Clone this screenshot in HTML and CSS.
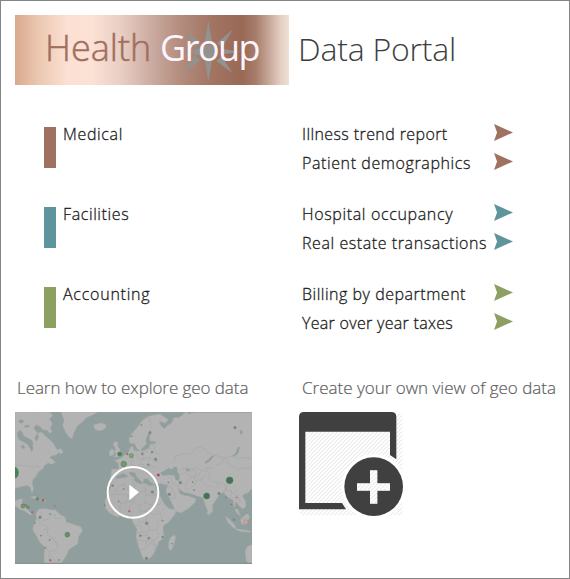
FILE: index.html
```
<!DOCTYPE html>
<html lang="en">
<head>
<meta charset="utf-8">
<title>Health Group Data Portal</title>
<link rel="stylesheet" href="styles.css">
</head>
<body>
<main class="portal">
  <header class="header">
    <div class="logo">
      <svg class="star" viewBox="552 62 168 184" aria-hidden="true"><path fill="#92928f" d="M625 62l11 60-11 8-11-8zM625 246l-10-62 10-8 10 8zM698 88l-31 55-16-15zM698 219l-49-36 16-15zM552 88l49 39-16 16zM552 219l31-53 16 15zM552 155l50-11v22zM720 155l-55-9v18z"/><ellipse cx="626" cy="154" rx="18" ry="21" fill="#92928f"/></svg>
      <div class="brand"><span class="health">Health</span><span class="group">Group</span></div>
    </div>
    <h1 class="title">Data Portal</h1>
  </header>

  <section class="topic medical">
    <div class="bar"></div>
    <h2 class="name"><span class="n1">Medical</span></h2>
    <ul class="reports">
      <li><span class="t1">Illness trend report</span><svg class="arrow" viewBox="0 0 56 50"><path d="M0 0L56 25 0 50 9 25z"/></svg></li>
      <li><span class="t2">Patient demographics</span><svg class="arrow" viewBox="0 0 56 50"><path d="M0 0L56 25 0 50 9 25z"/></svg></li>
    </ul>
  </section>
  <section class="topic facilities">
    <div class="bar"></div>
    <h2 class="name"><span class="n2">Facilities</span></h2>
    <ul class="reports">
      <li><span class="t3">Hospital occupancy</span><svg class="arrow" viewBox="0 0 56 50"><path d="M0 0L56 25 0 50 9 25z"/></svg></li>
      <li><span class="t4">Real estate transactions</span><svg class="arrow" viewBox="0 0 56 50"><path d="M0 0L56 25 0 50 9 25z"/></svg></li>
    </ul>
  </section>
  <section class="topic accounting">
    <div class="bar"></div>
    <h2 class="name"><span class="n3">Accounting</span></h2>
    <ul class="reports">
      <li><span class="t5">Billing by department</span><svg class="arrow" viewBox="0 0 56 50"><path d="M0 0L56 25 0 50 9 25z"/></svg></li>
      <li><span class="t6">Year over year taxes</span><svg class="arrow" viewBox="0 0 56 50"><path d="M0 0L56 25 0 50 9 25z"/></svg></li>
    </ul>
  </section>

  <div class="actions">
    <section class="learn">
      <h3><span class="learn-text">Learn how to explore geo data</span></h3>
      <svg class="map" viewBox="45 141 711 456" role="img" aria-label="Play video">
        <rect x="45" y="141" width="711" height="456" fill="#909f9d"/>
        <g fill="#b3b3b3" stroke="#aaacab" stroke-width="1">
          <path d="M45 141H150L158 152 148 162 157 176 150 190 157 200 149 205 142 196 128 194 120 184 107 179 101 190 112 203 104 218 110 232 101 240 96 226 85 219 72 213 67 201 58 195 50 207 57 224 71 232 82 238 91 253 94 262 100 253 98 240 108 232 117 216 112 205 125 201 138 215 147 222 160 235 168 250 178 260 168 270 154 273 148 280 158 283 166 293 152 298 145 293 132 302 130 310 115 320 108 333 98 345 97 358 101 373 96 384 90 366 80 361 66 364 54 367 45 371z"/>
          <path d="M96 152l20-8 16 12 18 8 6 14-18 2-16-12-18-4zM45 141h30l-6 12-24 4zM170 257l12-7 8 12-8 4z"/>
          <path d="M183 141H293L278 150 260 157 247 171 233 182 222 202 216 222 205 214 195 198 188 181 193 166z"/>
          <path d="M281 180l10-3 12-3 14 5 1 8-10 8-12 2-12-5z"/>
          <path d="M45 408l14-6 10 0-4 10 5 10 12 2 3 13 12 11-8 2-14-12-12-4-21-14z"/>
          <path d="M90 397l15-3 16 6-15 1zM122 403l14 1 2 5-13 1z"/>
          <path d="M108 445l10-13 22-1 10 3 16 1 15 14 14 7 4 15 18 6 26 9 5 11-12 17-3 22-15 10-12 8-6 16-8 13-9 12h-50l-1-22 3-25-15-16-14-25-8-13 4-18 8-13z"/>
          <path d="M332 346l3-33 22-1-3-19-11-6 12-4 10-5 12-10 9-7 5-14 7-5 3 14 13 3 20-3 14-8 4-12 12 1 5-7-18-2-3-12 8-14-5-7-9 16-5 14 2 12-11 11-8 10-8-6-8-16-15-2-2-13 6-14 17-17 16-23 14-10 12-5 28-5 25 17-9 11-19-7 6 15 10 9 8-9 14-9 7-17 14 1 9-6 14-13 5 8 20-4H756V370l-12 14-10 2-7 7 8 13 3 17-9 9-10-8-12-15-2 12 9 15 8 17-12-9-7-17-4-23-13-5-16-17-9 5-14 19-9 13 0 20-8 9-12-22-9-28-19-6-21-7-18-3-17-12 6 16 15 6 11 1 22 9-4 11-18 17-23 14-16-6-11-22-16-29-2-10 6-18-14-1-13-3-13 4-13-7-8-11-12 1-2 13-11-11-11-13 0-7-14-4-7 4 11 12 7 11-7 5-15-20-12-7-13 5-7 4-4 13-11 11z"/>
          <path d="M346 229l8 4-2 11 7 8 4 12-4 10-18 3 8-10-5-8 3-9-8-12zM328 258l8-6 7 6-2 11-12 4z"/>
          <path d="M341 344l22-5 24-4 15 0 1 13 16 8 18-1 10 7 17-1 7 12 10 22 13 24 15 13 20 1-4 15-16 20-19 15-1 13 4 22-17 12-4 13-11 24-13 14-16 3-7-14-10-28-7-27 3-22-14-26-3-16-13 2-15-1-17 3-21-12-11-13-2-23 9-21z"/>
          <path d="M511 519l11-10 5 7-7 28-7 13-7-6 0-18zM624 436l5 6-2 9-6-5zM676 454l12 9 17 18 4 12-11-6-15-16zM708 491l19 3 24 4-1 4-24-2-18-5zM721 463l20-17 8 7-4 13-8 14-13-4zM756 539l-14 5-6 14 2 28 9 11h9z"/>
        </g>
        <g fill="#909f9d" stroke="none">
          <path d="M481 323l15-7 9-7 14 5 14 12-7 6-21-3-18 3zM516 313l7-8 10 3-2 10 8 12-2 18-10-4-5-18zM558 309l12 2-3 9-9-3zM615 291l21-18 8-2-14 17-14 9zM697 270l9-4 8-20 6 1-6 19-13 9zM719 198l4-4 6 8-7 8zM485 353l6 16 24 45-4 5-28-48z"/>
          <path d="M54 168l13-6 5 9-10 5zM72 183l14-4 3 7-13 2zM61 242l10-1 5 9-8 1z"/>
        </g>
        <g fill="none" stroke="#a0a2a1" stroke-width="1.5" stroke-linejoin="round">
          <path d="M45 301l38 1 12 5 18-4 10 7M122 438l4 16-12 10 8 12-14 13m18-22 20-5 12-15M128 478l16 10-2 22 17 8 14 24-8 15-17 4-12-15-14-2m26 20-2 22M144 488l-14 10m30 20-14 8m14 0 16 14m-24 32 18 20M165 447l1 14 14-1 8-11"/>
          <path d="M389 197l10 15 3-25 13-22 20-11 14 8 5 25M390 268l8 18-5 11 15 7 14-8 11 5m-13-8 8-13 22-2 16 12 13-3m-70-20 6 12 18 7m-10-23 18-2 8-12 12 14 16 2 8 10M366 285l14 8 6 14m10-7 13 9 17-4 16 5 9-7 22 6M428 260l4 18m17-1-5 14M451 235l15 10-6 16"/>
          <path d="M522 291l6-18 18-7 25 2 15-18 16-4 14 7 17 14 28 8 11 4-8 17-14 3-10 11-24 0-11 9-15-10-20 8-15-7-12 3m129-34 22-5 18 6 25-3 16 4 24-8m-103 5 18 24 25 10 32-4 18-15 11 4M631 301l-15 14 14 10-3 13 10 10 16 5 17 2 11 8-3 14m-103-66 14 10-8 20 13 8 14-8 10-14M497 329l15 9 5 16 20 11m0-34 18-8 16 11-9 17-8 18 11 6M570 334l17 1 16-11m-33 46 13-10 14-23m7 7 8 13 14 7 13 0m18 6-6-12m21 7 9 11 14 3-4 20"/>
          <path d="M338 384l21-20 18-8m-11 2 42 33 26-17M397 341l8 28-2 17m33-24 1 29 37-2m-37 2-2 24-18 7 5 20m-5-20-21-15-23 8m-43-25 35-3 20 4-5 19-20 6m5-6-8 22m50-35-15 22-6 15m-24-2-3 17m-15-21-8 17M437 415l20 6 22-3 9-16m-31 19-15 18-22-2m22 2 16 10 22-4 13-17m-13 17 5 20-17 10m-24-24-8 18-22 4m30-4 3 25 24 1 3-17m-27 16-8 19-22-5m30 5 9 14 17-8 2-16m-19 24-12 12m12-12 12 13-5 15M403 480l20 2 3 20-18 2m18-2 17-3M407 525l34 3 10-15m-10 15-4 22-18 5m18-5 15-14 19 6M481 365l19-4 17 10 8 16-4 12-13 1m13-1 12-5M490 405l18-11"/>
          <path d="M676 370l-4 17 11 11m7-22 12 12 12 4 9 23m-18-34 8-9m-17 27 13-3 8 13M722 464l13-3 11-6"/>
        </g>
        <g fill="#748b80" stroke="#727d78" stroke-width="1">
          <circle cx="424" cy="180" r="2"/><circle cx="394" cy="214" r="2"/><circle cx="449" cy="203" r="3"/><circle cx="427" cy="267" r="3"/><circle cx="456" cy="262" r="3"/><circle cx="467" cy="283" r="4" fill="#719479"/><circle cx="445" cy="299" r="3"/><circle cx="705" cy="188" r="4"/><circle cx="541" cy="353" r="4"/><circle cx="508" cy="388" r="4"/><circle cx="457" cy="381" r="4"/><circle cx="505" cy="352" r="2"/><circle cx="578" cy="351" r="2"/><circle cx="657" cy="386" r="4"/><circle cx="678" cy="397" r="2"/><circle cx="120" cy="457" r="4"/><circle cx="150" cy="447" r="2"/><circle cx="104" cy="474" r="2"/><circle cx="123" cy="512" r="2"/><circle cx="149" cy="525" r="2"/><circle cx="136" cy="548" r="2"/><circle cx="177" cy="585" r="2"/><circle cx="440" cy="475" r="4"/><circle cx="421" cy="512" r="3"/><circle cx="446" cy="520" r="3"/><circle cx="488" cy="516" r="3"/><circle cx="439" cy="580" r="4"/><circle cx="488" cy="467" r="2"/><circle cx="516" cy="536" r="2"/><circle cx="371" cy="372" r="2"/><circle cx="338" cy="362" r="3"/><circle cx="356" cy="409" r="2"/><circle cx="314" cy="421" r="2"/><circle cx="702" cy="464" r="3"/><circle cx="707" cy="428" r="2"/><circle cx="164" cy="423" r="2"/>
        </g>
        <g fill="#6e9e70" stroke="#527b58" stroke-width="2">
          <path d="M45 307a10 16 0 0 1 0 32z" fill="#428650"/><circle cx="359" cy="267" r="6" fill="#4f865c"/><circle cx="394" cy="272" r="6" fill="#89a881"/><circle cx="371" cy="297" r="8"/><circle cx="202" cy="509" r="7" fill="#5d9365"/><circle cx="112" cy="401" r="4"/><circle cx="69" cy="423" r="6"/><circle cx="83" cy="427" r="4"/><circle cx="689" cy="346" r="10" fill="#407556"/><circle cx="620" cy="393" r="9" fill="#407556"/>
        </g>
        <g fill="#b65d62" stroke="#a06c6e"><circle cx="382" cy="267" r="3"/><circle cx="475" cy="330" r="4" fill="#b13e4a"/><circle cx="388" cy="439" r="3"/><circle cx="129" cy="406" r="4"/><circle cx="78" cy="421" r="3"/><circle cx="97" cy="442" r="3"/><circle cx="151" cy="586" r="3"/><circle cx="582" cy="375" r="2"/><circle cx="694" cy="418" r="2"/><circle cx="710" cy="397" r="2"/><circle cx="738" cy="471" r="7" fill="#c7a2a1"/></g>
        <path d="M45 595H756" stroke="#829491" stroke-width="4"/>
        <circle cx="399" cy="382" r="76" fill="#888" fill-opacity=".08" stroke="#fff" stroke-width="6"/>
        <path d="M388 359L417 382 388 406z" fill="#fff"/>
      </svg>
    </section>
    <section class="create">
      <h3><span class="create-text">Create your own view of geo data</span></h3>
      <svg class="new-view" viewBox="42 142 312 312" role="img" aria-label="New view">
        <defs><pattern id="hatch" width="12" height="12" patternUnits="userSpaceOnUse"><path d="M-3 3L3-3M0 12L12 0M9 15L15 9" stroke="#e2e2e2" stroke-width="3"/></pattern></defs>
        <path fill="url(#hatch)" d="M45 147H352V452H45z"/>
        <path fill="#404040" fill-rule="evenodd" d="M42 434V157Q42 142 57 142H319Q334 142 334 157V284L315 271V201H61V415H171L183 434z"/>
        <circle cx="266" cy="366" r="97" fill="#fff"/>
        <circle cx="266" cy="366" r="88" fill="#404040"/>
        <path fill="#fff" d="M255 317H277V356H315V378H277V417H255V378H216V356H255z"/>
        <path fill="url(#hatch)" d="M255 317H277V356H315V378H277V417H255V378H216V356H255z"/>
      </svg>
    </section>
  </div>
</main>
</body>
</html>
```
FILE: styles.css
```
* { box-sizing: border-box; }
body { margin: 0; background: #fff; font-family: "Open Sans", "Noto Sans", sans-serif; color: #1c1c1c; }
.portal { width: 570px; height: 579px; border: 1px solid #858585; padding: 14px 0 0 14px; overflow: hidden; }
h1, h2, h3, ul { margin: 0; padding: 0; font-weight: 300; }
span { white-space: nowrap; }
.header { display: flex; height: 70px; }
.logo { position: relative; width: 274px; height: 70px; padding-left: 30px;
  background: linear-gradient(90deg, #d9a88e 0, #ecc9b2 9%, #fce0d3 19%, #fce1d5 28%, #e8cdc3 39%, #cbaaa0 50%, #b48d7e 60%, #a27462 72%, #996955 83%, #a77e6c 88%, #c8aa9c 93%, #e3cfc3 97%, #f0e0d5 100%); }
.star { position: absolute; left: 169px; top: 6px; width: 56px; height: 61px; }
.brand { position: relative; display: flex; gap: 10px; font-size: 36px; line-height: 65px; font-weight: 400; }
.health { color: #a06f5e; width: 105px; font-weight: 300; -webkit-text-stroke: .5px #a06f5e; }
.group { color: #fdf5fc; letter-spacing: -1.5px; }
.title { padding-left: 9px; font-size: 32px; line-height: 68px; letter-spacing: -.2px; color: #3c3e40; }

.topic { display: grid; grid-template-columns: 12px 246px 1fr; height: 80px; padding-left: 29px; }
.medical { margin-top: 39px; color: #9f7160; }
.facilities { color: #5e959d; }
.accounting { color: #8e9f62; }
.bar { width: 12px; height: 41px; margin-top: 3px; background: currentColor; }
.name, .reports { color: #1c1c1c; font-size: 16px; line-height: 20px; -webkit-text-stroke: .3px #1c1c1c; }
.name { padding-left: 7px; }
.reports { list-style: none; }
.reports li { display: grid; grid-template-columns: 192px 19px; height: 29px; }
.n1 { letter-spacing: .65px; }
.n2 { letter-spacing: .6px; }
.n3 { letter-spacing: .75px; }
.t1 { letter-spacing: .4px; }
.t2 { letter-spacing: .6px; }
.t3 { letter-spacing: .65px; }
.t4 { letter-spacing: .58px; }
.t5 { letter-spacing: .52px; }
.t6 { letter-spacing: .3px; }
.arrow { width: 19px; height: 17px; fill: #9f7160; }
.facilities .arrow { fill: #5e959d; }
.accounting .arrow { fill: #8e9f62; }

.actions { display: grid; grid-template-columns: 284px 1fr; margin-top: 12px; }
h3 { height: 36px; font-size: 17px; line-height: 24px; color: #606060; -webkit-text-stroke: .2px #606060; }
.learn h3 { padding-left: 2px; letter-spacing: -.07px; }
.create h3 { padding-left: 3px; }
.map { display: block; width: 237px; height: 152px; }
.new-view { display: block; width: 104px; height: 104px; }
```
